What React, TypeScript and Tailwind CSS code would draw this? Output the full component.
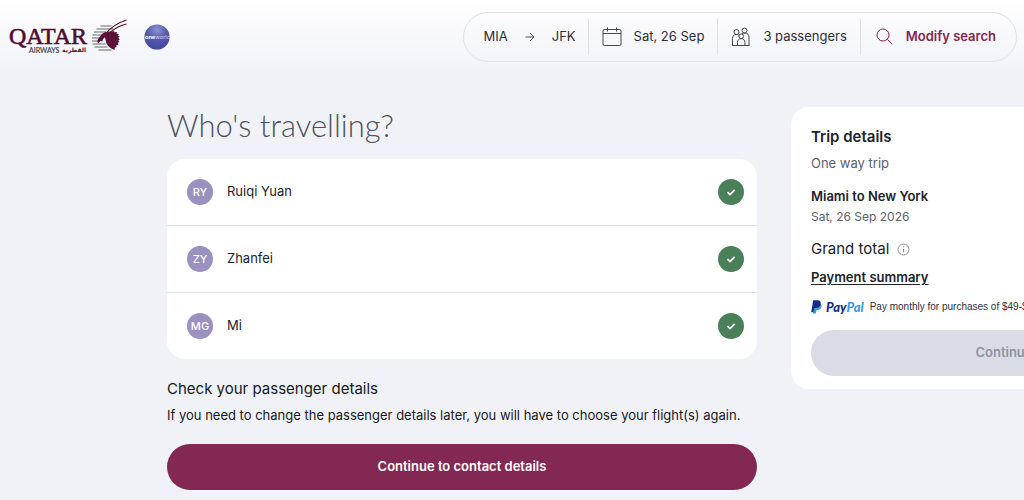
import React from "react";

const passengers = [
  { initials: "RY", name: "Ruiqi Yuan" },
  { initials: "ZY", name: "Zhanfei" },
  { initials: "MG", name: "Mi" },
];

function QatarLogo() {
  return (
    <svg width="120" height="38" viewBox="8 17 120 38" role="img" aria-label="Qatar Airways">
      <text x="9" y="43" fontFamily="Liberation Serif, serif" fontSize="24" fill="#4f0d30" stroke="#4f0d30" strokeWidth="0.6">QATAR</text>
      <text x="29" y="52" fontFamily="Lato, sans-serif" fontSize="7" fill="#45474f" stroke="#45474f" strokeWidth="0.2">AIRWAYS</text>
      <text x="62" y="51" fontFamily="DejaVu Sans, sans-serif" fontWeight="700" fontSize="6" fill="#5c1038">القطرية</text>
      <path
        d="M100.500 25h11M96.500 28h17M94 31h12M92.500 34h11M92 37h8M92 40h6M92.500 43h13M94.500 46h13M98.500 49h13"
        stroke="#92979d"
        strokeWidth="1.600"
      />
      <path
        d="M97.500 41.300c-.6-1.500.3-3.200 1.800-4.800 1.500-1.700 2.500-3.700 4.500-4.700 2.200-1.200 5.300-1.600 8-1.300l2.600-.5-.3 1.300 3-.2-.8 1.500 2.600.5-1.200 1.500 2 1-1.500 1.300 1.700 1.400-1.700 1.100 1.300 1.700-1.900.7.800 2-2.100.4.200 2.100-1.700.3-.2 2.400c-3.800-1.200-7-3.500-8.400-7.200l-.6-2.300-2.600 1-2.600-.6-1.200 1.700c-.7.700-1.400.5-1.700-.3z"
        fill="#5c1038"
      />
      <path d="M102.400 41.800c-.2-2.200.4-4.200 2.300-5.600 1.200 1.700 1.100 3.800.1 5.600z" fill="#f4f4f8" />
      <path d="M106 32.300C110.500 26.700 117.500 22 126.500 19M110.500 31.300c4.500-4.100 9.500-7 16-8.300" fill="none" stroke="#5c1038" strokeWidth="1.200" />
    </svg>
  );
}

function OneworldLogo() {
  return (
    <svg width="26" height="26" viewBox="0 0 26 26" role="img" aria-label="oneworld">
      <defs>
        <radialGradient id="globe" cx="50%" cy="22%" r="80%">
          <stop offset="0" stopColor="#8b93cf" />
          <stop offset="0.5" stopColor="#5558ab" />
          <stop offset="1" stopColor="#4245a0" />
        </radialGradient>
      </defs>
      <circle cx="13" cy="13" r="12.600" fill="url(#globe)" />
      <text x="1" y="15" fontSize="6" fontFamily="Lato, sans-serif" fill="#c9cbea"><tspan fontWeight="900" fill="#ffffff">one</tspan>world</text>
    </svg>
  );
}

function ArrowIcon() {
  return (
    <svg width="10" height="10" viewBox="0 0 10 10" fill="none" stroke="#4b505b" strokeWidth="1" aria-hidden="true">
      <path d="M.5 5h8.500M5 1l4 4-4 4" />
    </svg>
  );
}

function CalendarIcon() {
  return (
    <svg width="20" height="20" viewBox="0 0 20 20" fill="none" stroke="#43474f" strokeWidth="1" aria-hidden="true">
      <rect x="1" y="2.500" width="18" height="16" rx="1.500" />
      <path d="M1 6.500h18M5.500 .5v4M14.500 .5v4" />
    </svg>
  );
}

function PeopleIcon() {
  return (
    <svg width="20" height="20" viewBox="0 0 20 20" fill="none" stroke="#43474f" strokeWidth="1" aria-hidden="true">
      <circle cx="5.500" cy="5" r="2.500" />
      <circle cx="13.500" cy="3.500" r="2.500" />
      <circle cx="10.200" cy="9.300" r="2.300" />
      <path d="M1.500 18.500v-7c0-2.500 1.300-4 3.700-4 1.200 0 2 .3 2.700 1M11 7c.7-.7 1.500-1 2.700-1 2.800 0 4.300 1.800 4.300 4.500v8" />
      <path d="M6.500 18.500v-3c0-2.400 1.400-3.900 3.700-3.900s3.700 1.500 3.700 3.900v3M1 18.500h17.500" />
    </svg>
  );
}

function SearchIcon() {
  return (
    <svg width="17" height="17" viewBox="0 0 17 17" fill="none" stroke="#8e2157" strokeWidth="1" aria-hidden="true">
      <circle cx="7" cy="7" r="6" />
      <path d="M11.300 11.300l5 5" />
    </svg>
  );
}

function InfoIcon() {
  return (
    <svg width="13" height="13" viewBox="0 0 13 13" fill="none" stroke="#8b8f99" strokeWidth="1" aria-hidden="true">
      <circle cx="6.500" cy="6.500" r="5.500" />
      <path d="M6.500 5.800v3.500M6.500 3.500v1" />
    </svg>
  );
}

function CheckBadge() {
  return (
    <svg width="26" height="26" viewBox="0 0 26 26" role="img" aria-label="Completed">
      <circle cx="13" cy="13" r="13" fill="#4a8058" />
      <path d="M9.500 13.200l2.500 2.400 4.700-4.700" fill="none" stroke="#fff" strokeWidth="1.700" />
    </svg>
  );
}

function PayPalLogo() {
  return (
    <span className="flex items-center gap-1">
      <svg width="11" height="14" viewBox="0 0 11 14" aria-hidden="true">
        <path d="M3.500 3.500h5c1.700.4 2.400 1.600 2 3.300-.5 2.200-2 3.200-4 3.200h-1l-.6 3.600H2z" fill="#3f9ade" />
        <path d="M2.200.3h4.300c2.300 0 3.600 1.300 3.200 3.600-.5 2.800-2.200 4-4.700 4H3.300l-.8 4.300H.2z" fill="#12307f" />
      </svg>
      <span className="font-['Lato'] text-[13px] leading-4 font-black italic text-[#12307f]">
        Pay<span className="text-[#3f9ade]">Pal</span>
      </span>
    </span>
  );
}

function SearchBar() {
  return (
    <div className="flex h-[50px] items-center rounded-full border border-[#e0e1e9] px-5 text-[13px] text-[#2c2f38]">
      <div className="flex items-center gap-[17px] pr-3">
        <span>MIA</span>
        <ArrowIcon />
        <span>JFK</span>
      </div>
      <div className="flex h-9 items-center gap-3 border-l border-[#dfe0e8] px-[13px]">
        <CalendarIcon />
        <span>Sat, 26 Sep</span>
      </div>
      <div className="flex h-9 items-center gap-3 border-l border-[#dfe0e8] px-[13px]">
        <PeopleIcon />
        <span>3 passengers</span>
      </div>
      <div className="flex h-9 items-center border-l border-[#dfe0e8] pl-[15px]">
        <button type="button" className="flex items-center gap-[13px] font-semibold text-[#832650]">
          <SearchIcon />
          Modify search
        </button>
      </div>
    </div>
  );
}

export default function App() {
  return (
    <div className="min-h-screen overflow-hidden bg-[#f1f2f8] font-['Inter',sans-serif] text-[#20232b]">
      <header className="flex h-[73px] items-center justify-between bg-linear-to-b from-white to-[#f1f2f8] pr-[7px] pl-2">
        <div className="flex items-center gap-4">
          <a href="#home"><QatarLogo /></a>
          <OneworldLogo />
        </div>
        <SearchBar />
      </header>

      <main className="flex items-start gap-[34px] pl-[167px] pt-[34px]">
        <section className="min-w-0 flex-1">
          <h1 className="font-['Lato'] text-[31px] leading-9 font-light text-[#4c525d]">Who's travelling?</h1>
          <ul className="mt-4 divide-y divide-[#e3e3ee] rounded-[18px] bg-white">
            {passengers.map((p) => (
              <li key={p.initials} className="flex h-[67px] items-center pr-[13px] pl-5 last:h-[66px]">
                <span className="flex size-[26px] items-center justify-center rounded-full bg-[#9b91c1] text-[11px] font-medium text-white">
                  {p.initials}
                </span>
                <span className="ml-[14px] flex-1 text-[13px]">{p.name}</span>
                <CheckBadge />
              </li>
            ))}
          </ul>
          <h2 className="mt-5 text-[15px] leading-5 text-[#16181d]">Check your passenger details</h2>
          <p className="mt-2 text-[13px] leading-4 text-[#16181d]">
            If you need to change the passenger details later, you will have to choose your flight(s) again.
          </p>
          <button type="button" className="mt-[21px] h-[46px] w-full rounded-full bg-[#822852] text-[13px] font-semibold text-white">
            Continue to contact details
          </button>
        </section>

        <aside className="w-[233px] shrink-0">
          <div className="w-[426px] rounded-[18px] bg-white px-5 pt-5 pb-[13px]">
            <h2 className="text-[15px] leading-5 font-semibold">Trip details</h2>
            <p className="mt-[6px] text-[13px] leading-5 text-[#5c626e]">One way trip</p>
            <h3 className="mt-[13px] text-[13px] leading-5 font-semibold">Miami to New York</h3>
            <p className="mt-[3px] text-[12px] leading-4 text-[#5c626e]">Sat, 26 Sep 2026</p>
            <div className="mt-[14px] flex items-center gap-2 text-[15px] leading-5">
              <span>Grand total</span>
              <InfoIcon />
            </div>
            <a href="#payment-summary" className="mt-2 block text-[13px] leading-5 font-semibold underline underline-offset-2">
              Payment summary
            </a>
            <div className="mt-3 flex items-center gap-[6px]">
              <PayPalLogo />
              <span className="font-['Liberation_Sans'] text-[10px] leading-4 whitespace-nowrap text-[#2c2f38]">
                Pay monthly for purchases of $49-$10,000.
              </span>
            </div>
            <button type="button" disabled className="mt-[15px] h-[46px] w-full rounded-full bg-[#dadce5] text-[13px] font-semibold text-[#8f939e]">
              Continue
            </button>
          </div>
        </aside>
      </main>
    </div>
  );
}
